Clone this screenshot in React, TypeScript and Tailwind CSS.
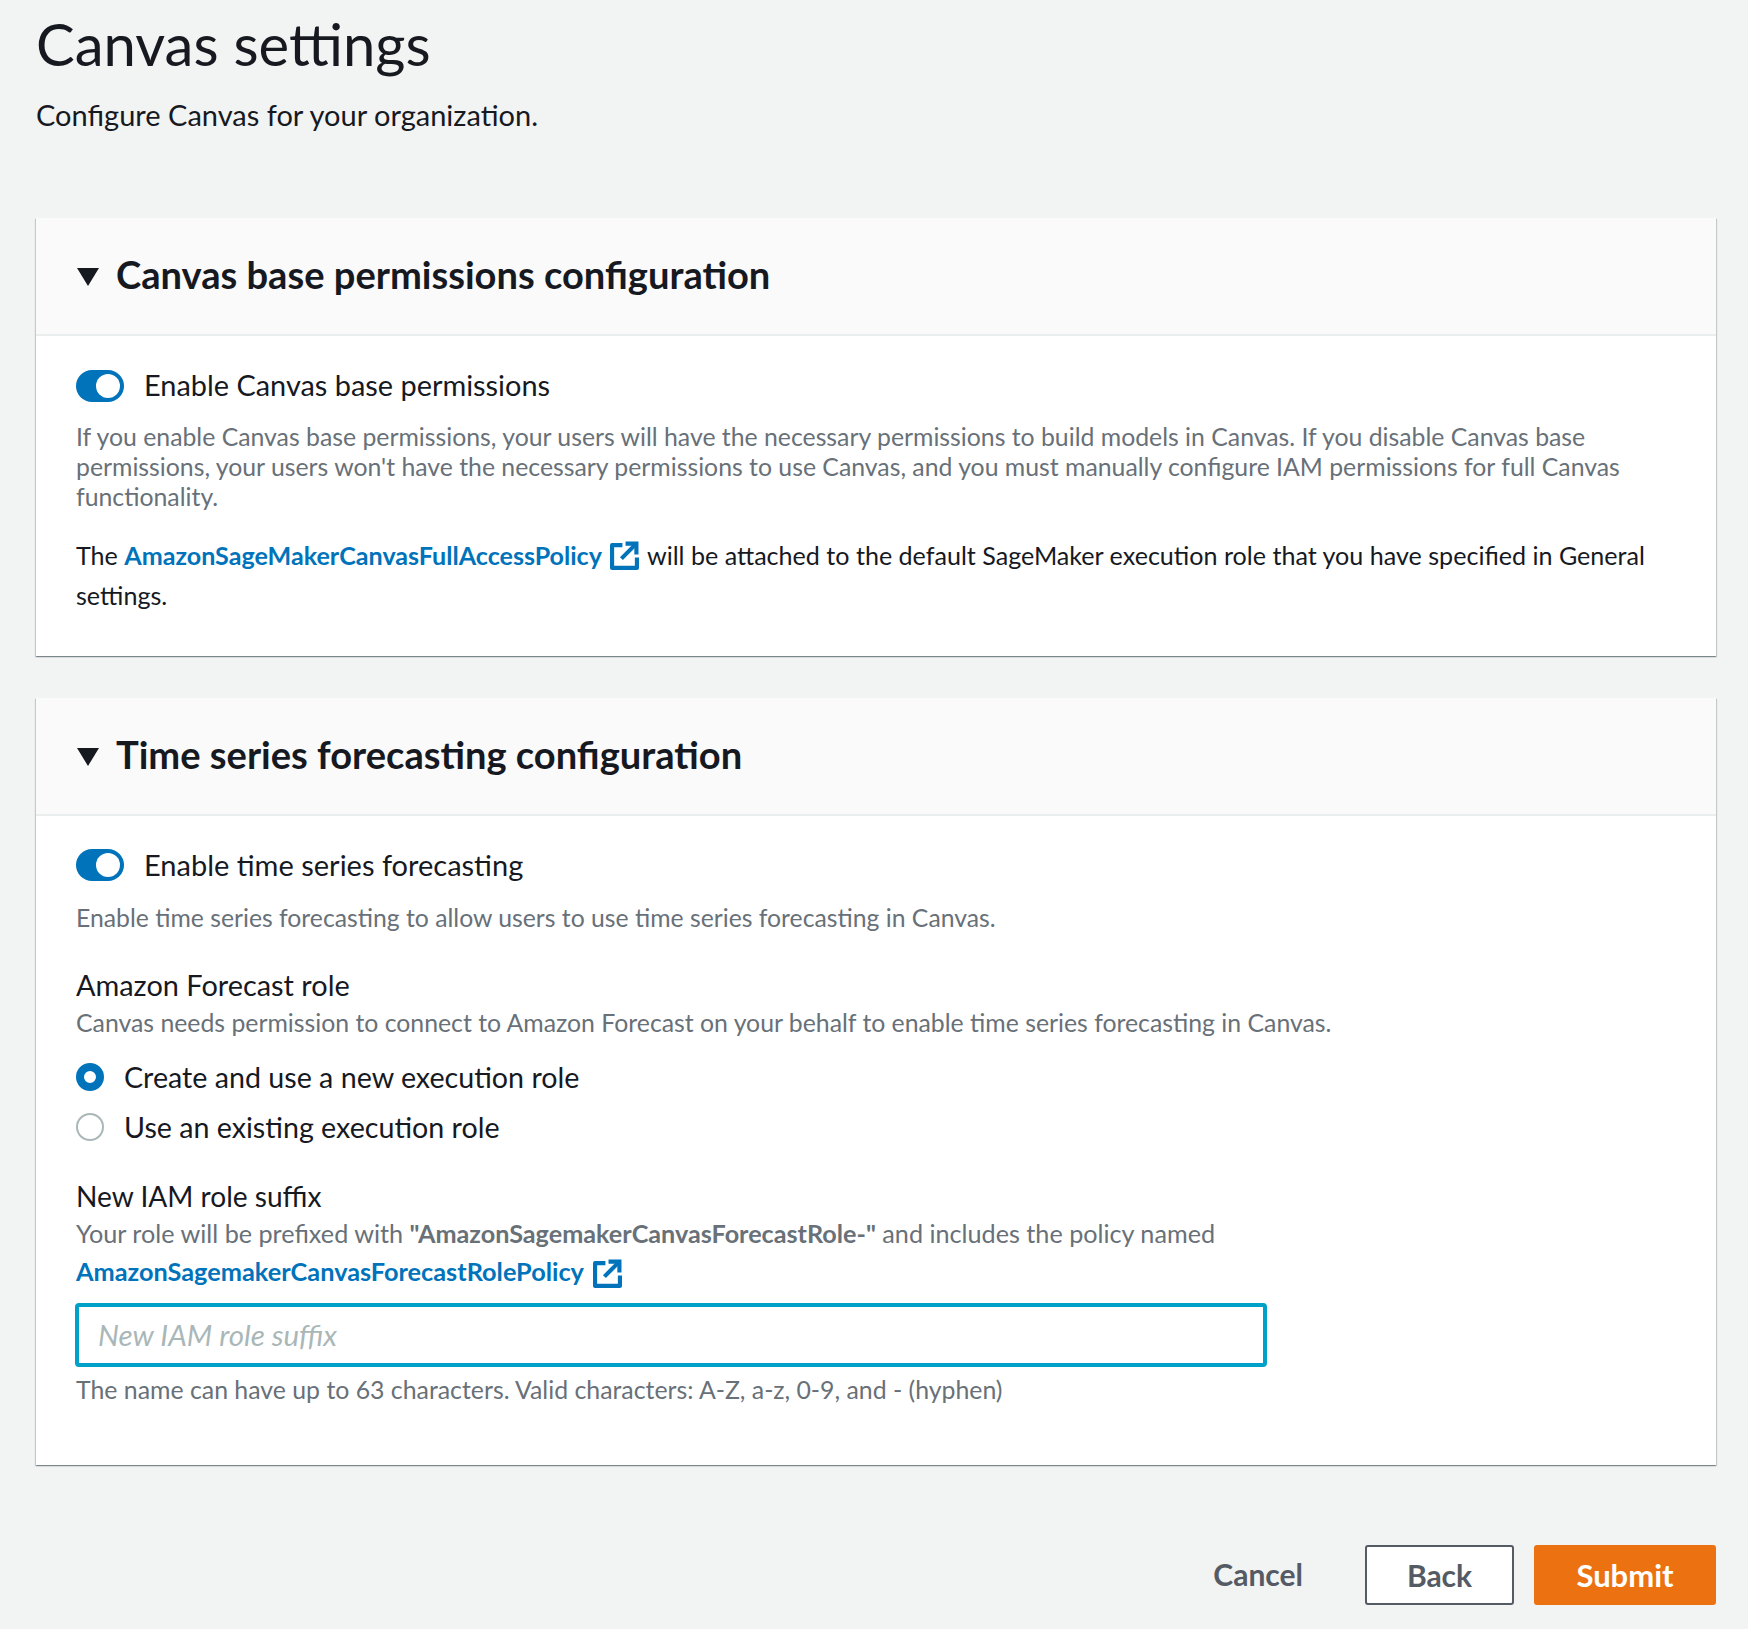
const font = "font-['Lato','Noto_Sans',sans-serif]";

function ExternalIcon({ className }: { className: string }) {
  return (
    <svg viewBox="0 0 28 28" className={className} fill="none" stroke="#0073bb" strokeWidth="4">
      <path d="M12 4H2v22h24V16" strokeLinejoin="round" />
      <path d="M11 17L24 4" />
      <path d="M15 2.500h10.500V13" />
    </svg>
  );
}

function Toggle() {
  return (
    <div className="w-12 h-8 rounded-full bg-[#0073bb] flex items-center justify-end pr-1 shrink-0">
      <div className="w-6 h-6 rounded-full bg-white" />
    </div>
  );
}

function Header({ title }: { title: string }) {
  return (
    <div className="h-[118px] bg-[#fafafa] border-b-2 border-[#eaeded] flex items-center pl-[41px]">
      <svg viewBox="0 0 22 18" className="w-[22px] h-[18px] mr-[17px] shrink-0 mt-[1px]">
        <path d="M0 0H22L11 18Z" fill="#16191f" />
      </svg>
      <h2 className="text-[38.100px] leading-[44px] font-bold text-[#16191f] mb-[5px]">{title}</h2>
    </div>
  );
}

function Radio({ checked, label }: { checked: boolean; label: string }) {
  return (
    <div className="flex items-center h-[50px]">
      {checked ? (
        <div className="w-7 h-7 rounded-full border-[8px] border-[#0073bb] bg-white shrink-0" />
      ) : (
        <div className="w-7 h-7 rounded-full border-2 border-[#aab7b8] bg-white shrink-0" />
      )}
      <span className="ml-[20px] text-[28.650px] leading-[40px] text-[#16191f]">{label}</span>
    </div>
  );
}

export default function App() {
  return (
    <div className={`${font} w-[1748px] h-[1629px] bg-[#f2f3f3] pl-9 pr-8 overflow-hidden`}>
      <h1 className="text-[58px] leading-[64px] text-[#16191f] pt-[12px]">Canvas settings</h1>
      <p className="text-[29px] leading-[40px] text-[#16191f] mt-[19px]">Configure Canvas for your organization.</p>

      <section className="mt-[83px] bg-white shadow-[0_1px_1px_0_rgba(0,28,36,0.3),1px_1px_1px_0_rgba(0,28,36,0.15),-1px_1px_1px_0_rgba(0,28,36,0.15)]">
        <Header title="Canvas base permissions configuration" />
        <div className="pl-10 pr-10 pt-[32px] pb-[41px]">
          <div className="flex items-center h-[36px]">
            <Toggle />
            <span className="ml-5 text-[28.900px] leading-[40px] text-[#16191f] mb-[2px]">Enable Canvas base permissions</span>
          </div>
          <p className="mt-[18px] text-[24.8px] leading-[30px] text-[#687078]">
            If you enable Canvas base permissions, your users will have the necessary permissions to build models in Canvas. If you disable Canvas base permissions, your users won't have the necessary permissions to use Canvas, and you must manually configure IAM permissions for full Canvas functionality.
          </p>
          <p className="mt-[23px] text-[25.1px] leading-[40px] text-[#16191f]">
            The <a className="font-bold text-[#0073bb]">AmazonSageMakerCanvasFullAccessPolicy</a>
            <ExternalIcon className="inline-block w-[29px] h-[29px] mx-2 align-[-5px]" />
            will be attached to the default SageMaker execution role that you have specified in General settings.
          </p>
        </div>
      </section>

      <section className="mt-[42px] bg-white shadow-[0_1px_1px_0_rgba(0,28,36,0.3),1px_1px_1px_0_rgba(0,28,36,0.15),-1px_1px_1px_0_rgba(0,28,36,0.15)]">
        <Header title="Time series forecasting configuration" />
        <div className="pl-10 pr-10 pt-[31px] pb-[59px]">
          <div className="flex items-center h-[36px]">
            <Toggle />
            <span className="ml-5 text-[29px] leading-[40px] text-[#16191f]">Enable time series forecasting</span>
          </div>
          <p className="mt-[20px] text-[24.75px] leading-[30px] text-[#687078]">Enable time series forecasting to allow users to use time series forecasting in Canvas.</p>

          <div className="mt-[32px] text-[28.900px] leading-[40px] text-[#16191f]">Amazon Forecast role</div>
          <p className="mt-[1px] text-[24.8px] leading-[34px] text-[#687078]">Canvas needs permission to connect to Amazon Forecast on your behalf to enable time series forecasting in Canvas.</p>
          <div className="mt-[12px]">
            <Radio checked label="Create and use a new execution role" />
            <Radio checked={false} label="Use an existing execution role" />
          </div>

          <div className="mt-[24px] text-[28.100px] leading-[40px] text-[#16191f]">New IAM role suffix</div>
          <p className="text-[25.2px] leading-[34px] text-[#687078]">
            Your role will be prefixed with <b>"AmazonSagemakerCanvasForecastRole-"</b> and includes the policy named
          </p>
          <div className="mt-[3px] text-[25.3px] leading-[36px] flex items-center">
            <a className="font-bold text-[#0073bb]">AmazonSagemakerCanvasForecastRolePolicy</a>
            <ExternalIcon className="w-[29px] h-[29px] ml-[9px] mt-[4px]" />
          </div>
          <div className="mt-[14px] -ml-[1px] w-[1192px] h-[64px] rounded-[4px] border-[4px] border-[#00a1c9] bg-white flex items-center pl-[19px] text-[29.500px] italic text-[#aab7b8]">
            New IAM role suffix
          </div>
          <p className="mt-[5px] text-[24.85px] leading-[34px] text-[#687078]">The name can have up to 63 characters. Valid characters: A-Z, a-z, 0-9, and - (hyphen)</p>
        </div>
      </section>

      <div className="mt-[80px] flex justify-end items-center">
        <button className="text-[30px] font-bold text-[#545b64] mr-[62px] mb-[2px]">Cancel</button>
        <button className="w-[149px] h-[60px] rounded-[3px] border-2 border-[#545b64] bg-white text-[30px] font-bold text-[#545b64]">Back</button>
        <button className="w-[182px] h-[60px] ml-5 rounded-[3px] bg-[#ec7211] text-[31px] font-bold text-white">Submit</button>
      </div>
    </div>
  );
}
